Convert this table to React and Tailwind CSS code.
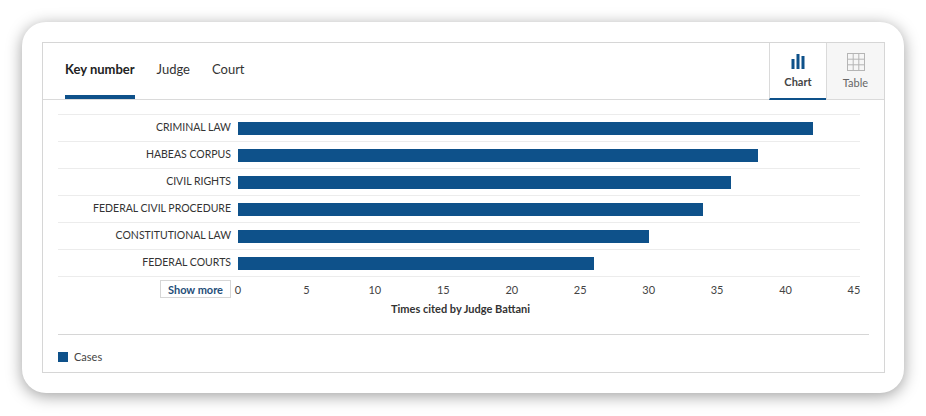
import { BarChart3 } from "lucide-react";

const data = [
  { label: "CRIMINAL LAW", value: 42 },
  { label: "HABEAS CORPUS", value: 38 },
  { label: "CIVIL RIGHTS", value: 36 },
  { label: "FEDERAL CIVIL PROCEDURE", value: 34 },
  { label: "CONSTITUTIONAL LAW", value: 30 },
  { label: "FEDERAL COURTS", value: 26 },
];

const ticks = [0, 5, 10, 15, 20, 25, 30, 35, 40, 45];
const max = 45;

function ChartIcon() {
  return (
    <svg width="16" height="15" viewBox="0 0 16 15">
      <rect x="1.5" y="5" width="3" height="10" fill="#0e518a" />
      <rect x="6.5" y="0" width="3" height="15" fill="#0e518a" />
      <rect x="11.5" y="2" width="3" height="13" fill="#0e518a" />
    </svg>
  );
}

function TableIcon() {
  return (
    <svg width="18" height="18" viewBox="0 0 18 18">
      <rect x="0.5" y="0.5" width="17" height="17" fill="none" stroke="#b5b5b5" />
      <line x1="6.2" y1="0" x2="6.2" y2="18" stroke="#b5b5b5" />
      <line x1="11.8" y1="0" x2="11.8" y2="18" stroke="#b5b5b5" />
      <line x1="0" y1="6.2" x2="18" y2="6.2" stroke="#b5b5b5" />
      <line x1="0" y1="11.8" x2="18" y2="11.8" stroke="#b5b5b5" />
    </svg>
  );
}

function App() {
  return (
    <div
      className="min-h-screen bg-white pt-[22px] pl-[22px]"
      style={{ fontFamily: "Lato, 'Open Sans', sans-serif" }}
    >
      <div className="w-[882px] h-[371px] bg-white rounded-[24px] shadow-[0_3px_16px_rgba(0,0,0,0.38)] p-[20px] pr-[19px]">
        <div className="h-full border border-[#d6d6d6] flex flex-col">
          {/* header with tabs */}
          <div className="h-[57px] flex border-b border-[#dadada]">
            <div className="flex flex-1 pl-[22px] gap-[22px] text-[13px] text-[#333]">
              <div className="flex flex-col justify-end">
                <span className="font-bold text-[#222] mb-[16px]">Key number</span>
                <div className="h-[4px] bg-[#0e518a]" />
              </div>
              <div className="flex flex-col justify-end">
                <span className="mb-[20px]">Judge</span>
              </div>
              <div className="flex flex-col justify-end">
                <span className="mb-[20px]">Court</span>
              </div>
            </div>
            <button className="w-[57px] border-l border-[#dadada] bg-white flex flex-col items-center border-b-[2px] border-b-[#0e518a] -mb-px pt-[11px]">
              <ChartIcon />
              <span className="text-[11px] font-bold text-[#444] mt-[5px]">Chart</span>
            </button>
            <button className="w-[58px] border-l border-[#dadada] bg-[#f6f6f6] flex flex-col items-center pt-[10px]">
              <TableIcon />
              <span className="text-[11px] text-[#666] mt-[4px]">Table</span>
            </button>
          </div>

          {/* chart */}
          <div className="pl-[15px] pr-[24px] pt-[14px]">
            {data.map((d) => (
              <div key={d.label} className="h-[27px] flex items-center border-t border-[#ececec]">
                <div className="w-[180px] pr-[7px] text-right text-[10.5px] text-[#333] whitespace-nowrap">
                  {d.label}
                </div>
                <div className="w-[616px]">
                  <div
                    className="h-[13px] bg-[#0e518a]"
                    style={{ width: `${(d.value / max) * 100}%` }}
                  />
                </div>
              </div>
            ))}
            <div className="flex border-t border-[#ececec] pt-[3px]">
              <div className="w-[180px] pr-[7px] flex justify-end">
                <button className="h-[18px] px-[7px] border border-[#d6d6d6] text-[11px] font-bold text-[#1f4e79] leading-none">
                  Show more
                </button>
              </div>
              <div className="w-[616px] relative h-[18px]">
                {ticks.map((t) => (
                  <span
                    key={t}
                    className="absolute top-[2px] -translate-x-1/2 text-[11px] text-[#444]"
                    style={{ left: `${(t / max) * 100}%` }}
                  >
                    {t}
                  </span>
                ))}
              </div>
            </div>
          </div>
          <div className="text-center text-[11px] font-bold text-[#333] mt-[3px] mr-[6px]">
            Times cited by Judge Battani
          </div>

          {/* legend */}
          <div className="mx-[15px] mt-[16px] border-t border-[#d6d6d6] pt-[14px] flex items-center gap-[6px]">
            <div className="w-[10px] h-[10px] bg-[#0e518a]" />
            <span className="text-[11px] text-[#444]">Cases</span>
          </div>
        </div>
      </div>
    </div>
  );
}

export default App;
